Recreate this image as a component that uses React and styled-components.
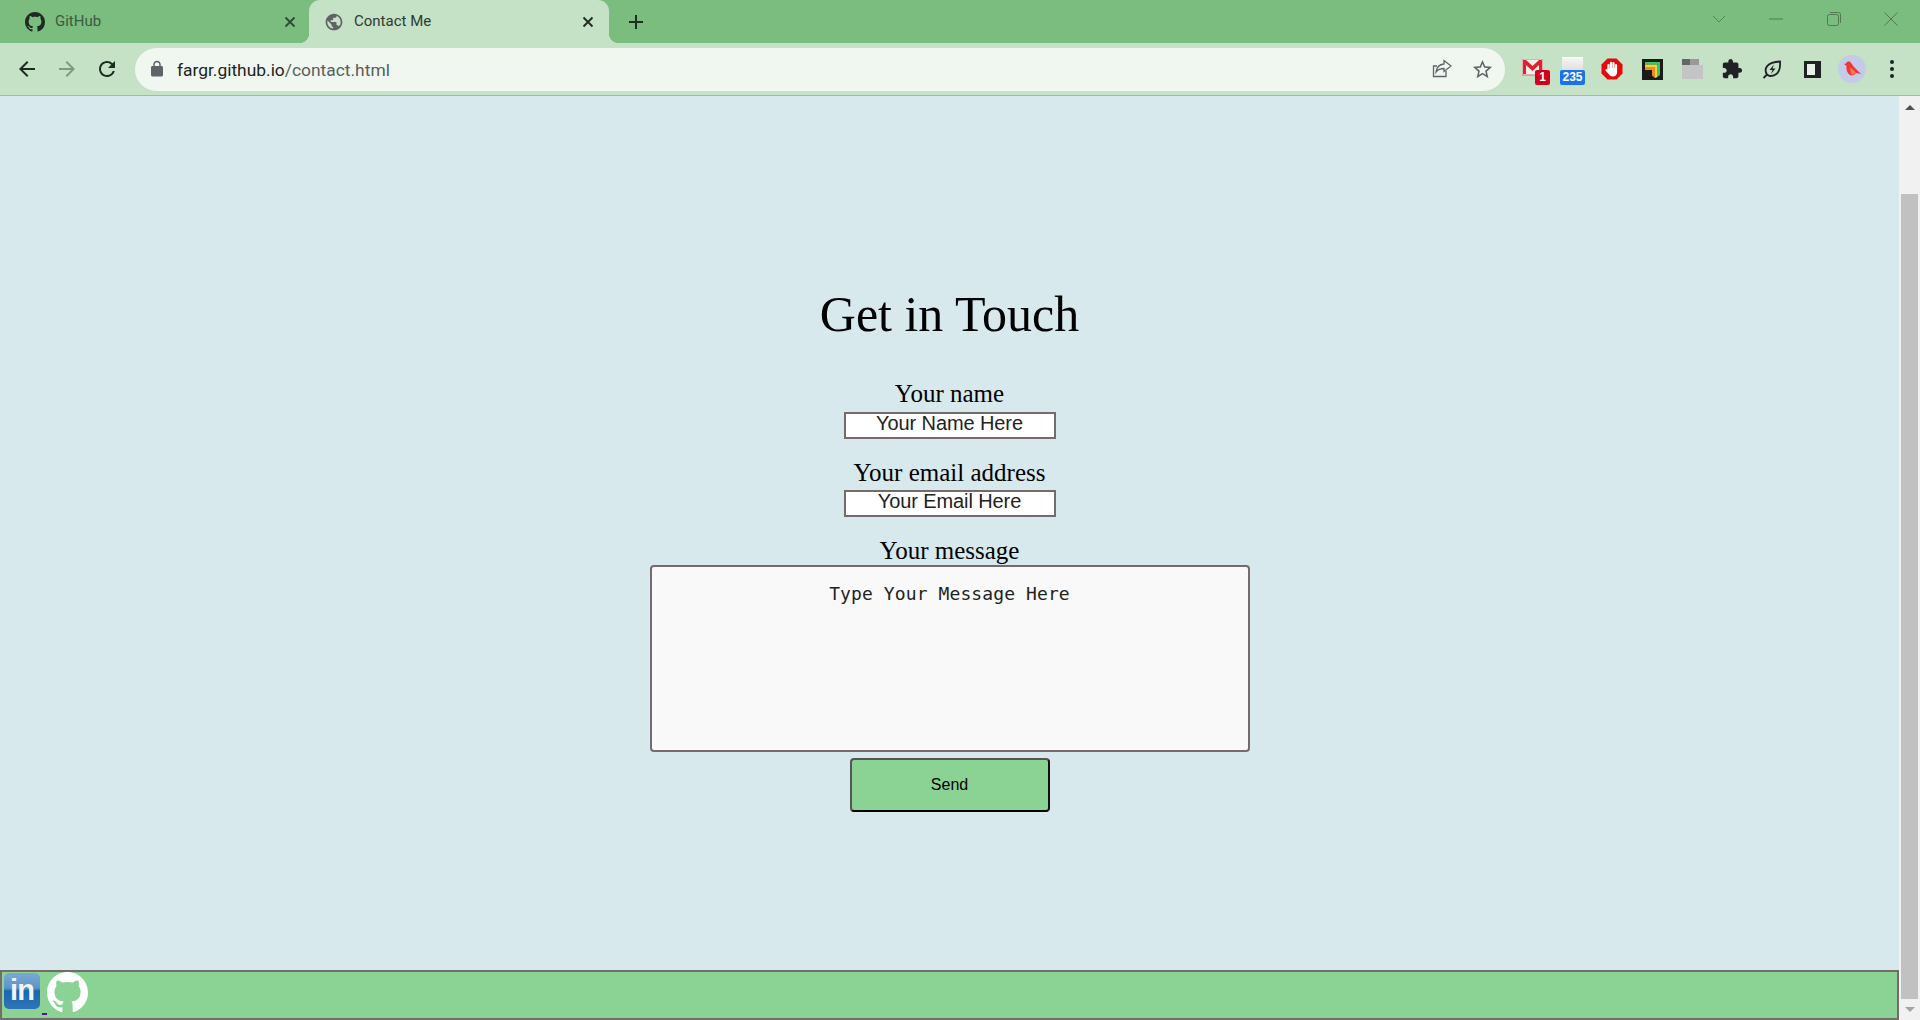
import React from 'react'
import styled, { createGlobalStyle } from 'styled-components'

const GITHUB_MARK = 'M8 0C3.58 0 0 3.58 0 8c0 3.54 2.29 6.53 5.47 7.59.4.07.55-.17.55-.38 0-.19-.01-.82-.01-1.49-2.01.37-2.53-.49-2.69-.94-.09-.23-.48-.94-.82-1.13-.28-.15-.68-.52-.01-.53.63-.01 1.08.58 1.23.82.72 1.21 1.87.87 2.33.66.07-.52.28-.87.51-1.07-1.78-.2-3.64-.89-3.64-3.95 0-.87.31-1.59.82-2.15-.08-.2-.36-1.02.08-2.12 0 0 .67-.21 2.2.82.64-.18 1.32-.27 2-.27.68 0 1.36.09 2 .27 1.53-1.04 2.2-.82 2.2-.82.44 1.1.16 1.92.08 2.12.51.56.82 1.27.82 2.15 0 3.07-1.87 3.75-3.65 3.95.29.25.54.73.54 1.48 0 1.07-.01 1.93-.01 2.2 0 .21.15.46.55.38A8.013 8.013 0 0016 8c0-4.42-3.58-8-8-8z'

const GlobalStyle = createGlobalStyle`
    html, body {
        margin: 0;
        height: 100%;
        overflow: hidden;
        background: #d8e9ed;
    }
`

const Window = styled.div`
    width: 1920px;
    height: 1020px;
    display: flex;
    flex-direction: column;
    font-family: "Liberation Serif", "Times New Roman", serif;
`

// browser chrome
const TabStrip = styled.div`
    height: 43px;
    display: flex;
    align-items: stretch;
    padding-left: 9px;
    background: #7abd7e;
    box-sizing: border-box;
    flex: none;
`

const Tab = styled.div`
    position: relative;
    width: 300px;
    box-sizing: border-box;
    display: flex;
    align-items: center;
    gap: 10px;
    padding: ${p => (p.$active ? '0 13px 0 15px' : '0 11px 0 16px')};
    border-radius: 11px 11px 0 0;
    background: ${p => (p.$active ? '#c5e1c6' : 'transparent')};

    ${p => p.$active && `
        &::before, &::after {
            content: '';
            position: absolute;
            bottom: 0;
            width: 10px;
            height: 10px;
        }
        &::before {
            left: -10px;
            background: radial-gradient(circle at 0 0, transparent 10px, #c5e1c6 10.5px);
        }
        &::after {
            right: -10px;
            background: radial-gradient(circle at 100% 0, transparent 10px, #c5e1c6 10.5px);
        }
    `}
`

const TabTitle = styled.span`
    flex: 1;
    font: 15px Roboto, "Liberation Sans", sans-serif;
    color: ${p => (p.$active ? '#2f3a31' : '#3c5a41')};
    padding-bottom: 1px;
`

const NewTab = styled.div`
    width: 20px;
    margin-left: 17px;
    display: flex;
    align-items: center;
    justify-content: center;
`

const Spacer = styled.div`
    flex: 1;
`

const WindowButton = styled.div`
    width: 57.5px;
    display: flex;
    align-items: center;
    justify-content: center;
    padding-bottom: 6px;
    box-sizing: border-box;
`

const Toolbar = styled.div`
    height: 53px;
    box-sizing: border-box;
    flex: none;
    display: flex;
    align-items: center;
    padding: 0 8px 0 7px;
    background: #c5e1c6;
    border-bottom: 1px solid #a2baa3;
`

const Slot = styled.div`
    position: relative;
    width: 40px;
    height: 40px;
    flex: none;
    display: flex;
    align-items: center;
    justify-content: center;
`

const Omnibox = styled.div`
    flex: 1;
    height: 43px;
    margin: 0 7px 0 8px;
    padding: 0 3px 0 13px;
    border-radius: 22px;
    background: #f0f7f0;
    display: flex;
    align-items: center;
`

const Url = styled.div`
    flex: 1;
    margin-left: 11px;
    padding-top: 2px;
    font: 17.4px Roboto, "Liberation Sans", sans-serif;
    color: #1c241d;
`

const UrlPath = styled.span`
    color: #55615a;
`

const Badge = styled.span`
    position: absolute;
    right: ${p => p.$right}px;
    bottom: 4px;
    height: 15px;
    min-width: ${p => p.$w}px;
    border-radius: 2px;
    background: ${p => p.$bg};
    color: #fff;
    font: bold 12px/15px "Liberation Sans", Arial, sans-serif;
    text-align: center;
`

const GmailPicture = styled.svg`
    position: absolute;
    left: 10px;
    top: 10px;
`

const CalendarTop = styled.div`
    position: absolute;
    left: 10px;
    top: 8px;
    width: 21px;
    height: 14px;
    background: linear-gradient(#f5f5f5, #dcdcdc);
    border-top: 1px solid #fff;
`

const FolderIcon = styled.div`
    width: 21px;
    height: 14px;
    margin-top: 6px;
    background: #c4c4c4;
    position: relative;

    &::before {
        content: '';
        position: absolute;
        left: 0;
        top: -6px;
        width: 17px;
        height: 6px;
        background: linear-gradient(90deg, #666 45%, #999 45%);
    }
`

const SidePanelIcon = styled.div`
    width: 8px;
    height: 11px;
    border: 3px solid #1f2124;
    border-right-width: 6px;
    background: #e8f0e8;
`

const Avatar = styled.div`
    width: 28px;
    height: 28px;
    border-radius: 50%;
    background: #c5cbe6;
    display: flex;
    align-items: center;
    justify-content: center;
`

// page
const Viewport = styled.div`
    flex: 1;
    min-height: 0;
    display: flex;
`

const Page = styled.div`
    flex: 1;
    min-width: 0;
    display: flex;
    flex-direction: column;
    background: #d8e9ed;
`

const Main = styled.main`
    flex: 1;
    padding-top: 190px;
    display: flex;
    flex-direction: column;
    align-items: center;
    color: #000;
`

const Title = styled.h1`
    margin: 0 0 38px;
    font-size: 50px;
    font-weight: 400;
    line-height: 56px;
`

const Label = styled.label`
    display: block;
    font-size: 25px;
    line-height: 28px;
    margin-top: ${p => p.$top || 0}px;
    margin-bottom: ${p => p.$bottom || 0}px;
`

const TextInput = styled.input`
    display: block;
    width: 212px;
    height: 27px;
    box-sizing: border-box;
    margin: 0;
    padding: 0 0 4px;
    border: 2px solid #766b6b;
    border-radius: 0;
    outline: none;
    background: #fff;
    text-align: center;
    font: 20px "Liberation Sans", Arial, sans-serif;
    letter-spacing: -0.1px;

    &::placeholder {
        color: #222;
        opacity: 1;
    }
`

const MessageBox = styled.textarea`
    display: block;
    width: 600px;
    height: 187px;
    box-sizing: border-box;
    margin: 0;
    padding: 16px 2px 2px;
    border: 2px solid #766b6b;
    border-radius: 4px;
    outline: none;
    resize: none;
    background: #f9f9f9;
    text-align: center;
    font: 18px "DejaVu Sans Mono", "Liberation Mono", monospace;
    letter-spacing: 0.1px;

    &::placeholder {
        color: #222;
        opacity: 1;
    }
`

const SendButton = styled.button`
    width: 200px;
    height: 54px;
    margin-top: 6px;
    box-sizing: border-box;
    border: 2px solid;
    border-color: #555 #111 #000 #555;
    border-radius: 4px;
    background: #8bd295;
    color: #000;
    font: 16px "Liberation Sans", Arial, sans-serif;
`

const Footer = styled.footer`
    height: 50px;
    box-sizing: border-box;
    flex: none;
    display: flex;
    align-items: flex-start;
    padding: 1px 2px;
    border: 2px solid #766b6b;
    background: #8bd295;
`

const LinkedInLogo = styled.a`
    width: 36px;
    height: 36px;
    border-radius: 5px;
    background: linear-gradient(#7ca9d3 0%, #5c93c8 42%, #1a66b2 50%, #2f74b8 100%);
    color: #f0f4f8;
    font: bold 29px/34px "Liberation Sans", Arial, sans-serif;
    letter-spacing: -1px;
    text-align: center;
    flex: none;
`

const LinkGap = styled.span`
    width: 5px;
    height: 2px;
    margin: 40px 0 0 2px;
    background: #551a8b;
    flex: none;
`

const GithubLogo = styled.svg`
    width: 41px;
    height: 41px;
    margin-top: -1px;
    fill: #fff;
    flex: none;
`

// scrollbar
const Scrollbar = styled.div`
    width: 21px;
    flex: none;
    display: flex;
    flex-direction: column;
    background: #f1f1f1;
`

const ScrollArrow = styled.div`
    height: ${p => p.$h}px;
    flex: none;
    display: flex;
    align-items: center;
    justify-content: center;
    padding-left: 1px;

    &::after {
        content: '';
        border-left: 5px solid transparent;
        border-right: 5px solid transparent;
        ${p => (p.$down
            ? 'border-top: 5px solid #a3a3a3;'
            : 'border-bottom: 5px solid #505050;')}
    }
`

const ScrollThumb = styled.div`
    height: 805px;
    margin: 76px 2px 0;
    background: #c1c1c1;
    flex: none;
`

const ChromeIcon = ({ d, size = 24, color = '#1f2a20' }) => (
    <svg width={size} height={size} viewBox="0 0 24 24" fill={color}>
        <path d={d} />
    </svg>
)

const GithubFavicon = () => (
    <svg width="20" height="20" viewBox="0 0 16 16" fill="#1f2a22">
        <path d={GITHUB_MARK} />
    </svg>
)

const CloseIcon = ({ color }) => (
    <svg width="16" height="16" viewBox="0 0 16 16" stroke={color} strokeWidth="1.8" fill="none">
        <path d="M3.5 3.5l9 9M12.5 3.5l-9 9" />
    </svg>
)

const GmailIcon = () => (
    <GmailPicture width="21" height="17" viewBox="0 0 21 17">
        <rect width="21" height="16" fill="#f4eeee" stroke="#c77" strokeWidth="1" />
        <path d="M1 1h3l6.500 6L17 1h3v14h-3V6l-6.500 6L4 6v9H1z" fill="#d8242a" />
    </GmailPicture>
)

const StopIcon = () => (
    <svg width="22" height="22" viewBox="0 0 22 22">
        <path d="M6.500 0.500h9l6 6v9l-6 6h-9l-6-6v-9z" fill="#e60b0b" />
        <path d="M7.500 11V7M10 10V4.800M12.500 10V5M15 11V7" stroke="#fff" strokeWidth="2.200" strokeLinecap="round" fill="none" />
        <path d="M6.400 10h9.700v4c0 3-2 4.500-4.500 4.500-2 0-3-1-4-2.500L4.500 12.500c-.500-1 1-2 2-1z" fill="#fff" />
    </svg>
)

const ArrowAppIcon = () => (
    <svg width="21" height="21" viewBox="0 0 21 21">
        <rect width="21" height="21" fill="#1a1a1a" />
        <path d="M3 3h15v13l-2.500 2V5.500H3z" fill="#37c46a" />
        <path d="M3 5.500h12.500V18l-2.500 1V8H3z" fill="#e8d83a" />
        <path d="M3 8h10v11l-3-2.500V11H3z" fill="#f08a24" />
    </svg>
)

const LeafIcon = () => (
    <svg width="20" height="20" viewBox="0 0 20 20" fill="none" stroke="#1f2124" strokeWidth="1.800">
        <path d="M5 15.500C1.500 10 4.500 3 18 2.500c.5 6-.5 14-9.500 14.500-1.500 0-2.500-.5-3.500-1.500z" />
        <path d="M1.500 19l3.500-3.500" />
        <path d="M12 5.500L7.500 11h3l-1.500 4 4.500-5.500h-3z" fill="#1f2124" stroke="none" />
    </svg>
)

const BirdIcon = () => (
    <svg width="20" height="18" viewBox="0 0 20 18">
        <path d="M2 4l2-.5C5 1 8 1 9 3c2 3 4 5 6 7l4 4-5-1c-1 2-4 3-6 2C5 13 4 9 4.500 6z" fill="#f0343c" />
        <path d="M8 8c2 0 4 2 6 5-2 2-4 2-5 1z" fill="#f87a3c" />
    </svg>
)

export default function App() {
    return (
        <Window>
            <GlobalStyle />
            <TabStrip>
                <Tab>
                    <GithubFavicon />
                    <TabTitle>GitHub</TabTitle>
                    <CloseIcon color="#2f4a33" />
                </Tab>
                <Tab $active>
                    <ChromeIcon size={20} color="#5f6368" d="M12 2C6.480 2 2 6.480 2 12s4.480 10 10 10 10-4.480 10-10S17.520 2 12 2zm-1 17.930c-3.950-.490-7-3.850-7-7.930 0-.620.080-1.210.210-1.790L9 15v1c0 1.100.900 2 2 2v1.930zm6.900-2.540c-.260-.810-1-1.390-1.900-1.390h-1v-3c0-.550-.450-1-1-1H8v-2h2c.550 0 1-.450 1-1V7h2c1.100 0 2-.900 2-2v-.410c2.930 1.190 5 4.060 5 7.410 0 2.080-.800 3.970-2.100 5.390z" />
                    <TabTitle $active>Contact Me</TabTitle>
                    <CloseIcon color="#1f2a20" />
                </Tab>
                <NewTab>
                    <svg width="16" height="16" viewBox="0 0 16 16" stroke="#1f2f22" strokeWidth="2">
                        <path d="M8 1v14M1 8h14" />
                    </svg>
                </NewTab>
                <Spacer />
                <WindowButton>
                    <svg width="14" height="8" viewBox="0 0 14 8" fill="none" stroke="#55875a" strokeWidth="1">
                        <path d="M1 1l6 6 6-6" />
                    </svg>
                </WindowButton>
                <WindowButton>
                    <svg width="14" height="2" viewBox="0 0 14 2" stroke="#4f7a53" strokeWidth="1">
                        <path d="M0 1h14" />
                    </svg>
                </WindowButton>
                <WindowButton>
                    <svg width="14" height="14" viewBox="0 0 14 14" fill="none" stroke="#4f7a53" strokeWidth="1">
                        <rect x="0.500" y="2.500" width="11" height="11" rx="2" />
                        <path d="M3 .5h8.500a2 2 0 012 2V11" />
                    </svg>
                </WindowButton>
                <WindowButton>
                    <svg width="14" height="14" viewBox="0 0 14 14" stroke="#4f7a53" strokeWidth="1">
                        <path d="M.5.5l13 13M13.500.5l-13 13" />
                    </svg>
                </WindowButton>
            </TabStrip>
            <Toolbar>
                <Slot>
                    <ChromeIcon color="#1f2a20" d="M20 11H7.830l5.590-5.590L12 4l-8 8 8 8 1.410-1.410L7.830 13H20v-2z" />
                </Slot>
                <Slot>
                    <ChromeIcon color="#7f9a82" d="M12 4l-1.410 1.410L16.170 11H4v2h12.170l-5.580 5.590L12 20l8-8z" />
                </Slot>
                <Slot>
                    <ChromeIcon color="#1f2a20" d="M17.650 6.350A7.958 7.958 0 0012 4c-4.420 0-7.990 3.580-7.990 8s3.570 8 7.990 8c3.730 0 6.840-2.550 7.730-6h-2.080A5.990 5.990 0 0112 18c-3.310 0-6-2.690-6-6s2.690-6 6-6c1.660 0 3.140.690 4.220 1.780L13 11h7V4l-2.350 2.350z" />
                </Slot>
                <Omnibox>
                    <ChromeIcon size={18} color="#5f6368" d="M18 8h-1V6c0-2.760-2.240-5-5-5S7 3.240 7 6v2H6c-1.100 0-2 .900-2 2v10c0 1.100.900 2 2 2h12c1.100 0 2-.900 2-2V10c0-1.100-.900-2-2-2zM9 6c0-1.660 1.340-3 3-3s3 1.340 3 3v2H9V6z" />
                    <Url>fargr.github.io<UrlPath>/contact.html</UrlPath></Url>
                    <Slot>
                        <svg width="20" height="20" viewBox="0 0 20 20" fill="none" stroke="#5f6368" strokeWidth="1.300">
                            <path d="M14 12v5.500H1.500V7H5" />
                            <path d="M12 1.500l7 5.500-7 5.500V9.500c-3.500 0-6 1-8 3.500.5-4.500 3.500-7.500 8-8z" />
                        </svg>
                    </Slot>
                    <Slot>
                        <ChromeIcon size={23} color="#5f6368" d="M22 9.240l-7.190-.620L12 2 9.190 8.630 2 9.240l5.460 4.730L5.820 21 12 17.270 18.180 21l-1.630-7.030L22 9.240zM12 15.400l-3.760 2.270 1-4.280-3.320-2.880 4.380-.380L12 6.100l1.710 4.040 4.380.380-3.320 2.880 1 4.280L12 15.400z" />
                    </Slot>
                </Omnibox>
                <Slot>
                    <GmailIcon />
                    <Badge $bg="#d0021b" $right={2} $w={15}>1</Badge>
                </Slot>
                <Slot>
                    <CalendarTop />
                    <Badge $bg="#1a73e8" $right={7} $w={25}>235</Badge>
                </Slot>
                <Slot><StopIcon /></Slot>
                <Slot><ArrowAppIcon /></Slot>
                <Slot><FolderIcon /></Slot>
                <Slot>
                    <ChromeIcon size={22} color="#1f2124" d="M20.500 11H19V7c0-1.100-.900-2-2-2h-4V3.500C13 2.120 11.880 1 10.500 1S8 2.120 8 3.500V5H4c-1.100 0-1.990.900-1.990 2v3.800H3.500c1.490 0 2.700 1.210 2.700 2.700s-1.210 2.700-2.700 2.700H2V20c0 1.100.900 2 2 2h3.800v-1.500c0-1.490 1.210-2.700 2.700-2.700 1.490 0 2.700 1.210 2.700 2.700V22H17c1.100 0 2-.900 2-2v-4h1.500c1.380 0 2.500-1.120 2.500-2.500S21.880 11 20.500 11z" />
                </Slot>
                <Slot><LeafIcon /></Slot>
                <Slot><SidePanelIcon /></Slot>
                <Slot>
                    <Avatar><BirdIcon /></Avatar>
                </Slot>
                <Slot>
                    <svg width="6" height="20" viewBox="0 0 6 20" fill="#1f2124">
                        <circle cx="3" cy="3" r="2" />
                        <circle cx="3" cy="10" r="2" />
                        <circle cx="3" cy="17" r="2" />
                    </svg>
                </Slot>
            </Toolbar>
            <Viewport>
                <Page>
                    <Main>
                        <Title>Get in Touch</Title>
                        <Label htmlFor="name" $bottom={4}>Your name</Label>
                        <TextInput id="name" placeholder="Your Name Here" />
                        <Label htmlFor="email" $top={20} $bottom={3}>Your email address</Label>
                        <TextInput id="email" placeholder="Your Email Here" />
                        <Label htmlFor="message" $top={20}>Your message</Label>
                        <MessageBox id="message" placeholder="Type Your Message Here" />
                        <SendButton>Send</SendButton>
                    </Main>
                    <Footer>
                        <LinkedInLogo>in</LinkedInLogo>
                        <LinkGap />
                        <GithubLogo viewBox="0 0 16 16">
                            <path d={GITHUB_MARK} />
                        </GithubLogo>
                    </Footer>
                </Page>
                <Scrollbar>
                    <ScrollArrow $h={22} />
                    <ScrollThumb />
                    <ScrollArrow $h={21} $down />
                </Scrollbar>
            </Viewport>
        </Window>
    )
}
